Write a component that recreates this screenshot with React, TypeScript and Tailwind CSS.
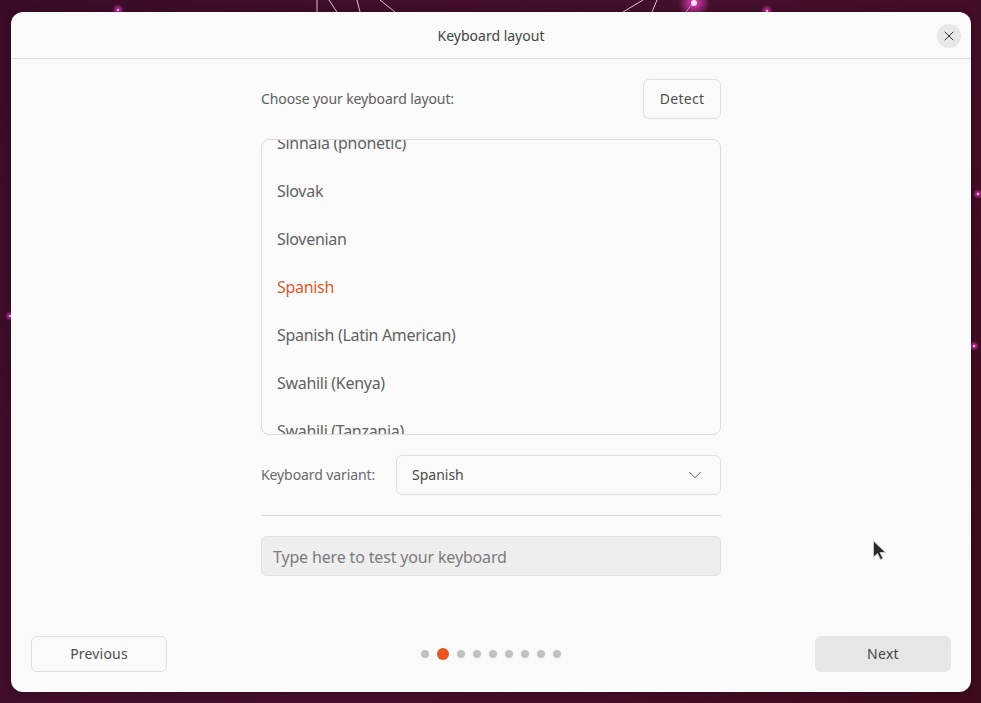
import { ChevronDown, X } from 'lucide-react';

const layouts = [
  'Sinhala (phonetic)',
  'Slovak',
  'Slovenian',
  'Spanish',
  'Spanish (Latin American)',
  'Swahili (Kenya)',
  'Swahili (Tanzania)',
];

const steps = [0, 1, 2, 3, 4, 5, 6, 7, 8];

const stars = [
  { x: 694, y: 3, r: 16, core: 3 },
  { x: 118, y: 10, r: 6, core: 1 },
  { x: 767, y: 11, r: 6, core: 1 },
  { x: 978, y: 194, r: 5, core: 1 },
  { x: 974, y: 346, r: 5, core: 1 },
  { x: 10, y: 316, r: 5, core: 1 },
];

function Backdrop() {
  return (
    <svg className="absolute inset-0" width="981" height="703" fill="none">
      <defs>
        <radialGradient id="glow">
          <stop offset="0" stopColor="#f040c8" stopOpacity="0.95" />
          <stop offset="1" stopColor="#f040c8" stopOpacity="0" />
        </radialGradient>
      </defs>
      <g stroke="#e6c4da" strokeWidth="1">
        <path d="M317 0v12M329 0l8 12M357 0l3 12M380 0l15 12" />
        <path d="M643 0l-20 12M657 0l-5 12M693 3l-7 9" />
      </g>
      {stars.map((star) => (
        <g key={star.x}>
          <circle cx={star.x} cy={star.y} r={star.r} fill="url(#glow)" />
          <circle cx={star.x} cy={star.y} r={star.core} fill="#ffe0f6" />
        </g>
      ))}
    </svg>
  );
}

export default function App() {
  return (
    <div className="relative flex h-[703px] w-[981px] overflow-hidden bg-[linear-gradient(120deg,#3c0b2a,#46102c_55%,#3e0a1e)] pt-3 pr-2.5 pb-[11px] pl-[11px] font-['Noto_Sans',sans-serif] text-[#4a4a4a]">
      <Backdrop />

      <div className="relative flex flex-1 flex-col overflow-hidden rounded-t-[12px] rounded-b-[12px] bg-[#fafafa] shadow-[0_0_8px_rgba(0,0,0,0.3)]">
        <header className="flex h-[47px] shrink-0 items-center justify-center border-b border-[#e0e0e0]">
          <h1 className="text-[14px] font-normal text-[#444]">Keyboard layout</h1>
          <button className="absolute top-3 right-[10px] flex h-6 w-6 items-center justify-center rounded-full bg-[#e8e8e8] text-[#333]">
            <X size={16} strokeWidth={1.5} />
          </button>
        </header>

        <main className="flex flex-1 flex-col items-center">
          <div className="flex w-[460px] flex-col">
            <div className="mt-5 flex h-10 items-center justify-between">
              <span className="pb-0.5 text-[14px] tracking-[-0.1px] text-[#606060]">Choose your keyboard layout:</span>
              <button className="h-10 w-[78px] rounded-md border border-[#e0e0e0] pb-0.5 text-[14px] tracking-[0.3px] text-[#4f4f4f]">
                Detect
              </button>
            </div>

            <div className="mt-5 h-[296px] overflow-hidden rounded-lg border border-[#dcdcdc]">
              <ul className="-mt-[21px] px-[15px]">
                {layouts.map((name) => (
                  <li
                    key={name}
                    className={`flex h-12 items-center text-[16px] tracking-[-0.3px] ${name === 'Spanish' ? 'text-[#e2582c]' : 'text-[#626262]'}`}
                  >
                    {name}
                  </li>
                ))}
              </ul>
            </div>

            <div className="mt-5 flex items-center justify-between">
              <span className="pb-0.5 text-[14px] tracking-[-0.1px] text-[#6a6a6a]">Keyboard variant:</span>
              <button className="flex h-10 w-[325px] items-center justify-between rounded-md border border-[#e0e0e0] pr-[14px] pl-[15px] text-[14px] text-[#4a4a4a]">
                <span className="pb-0.5">Spanish</span>
                <ChevronDown size={22} strokeWidth={1} className="text-[#555]" />
              </button>
            </div>

            <div className="mt-5 h-px bg-[#dadada]" />

            <div className="mt-5 flex h-10 items-center rounded-md border border-[#e0e0e0] bg-[#eeeeee] px-[11px] pt-0.5 text-[16px] tracking-[-0.16px] text-[#7c7c7c]">
              Type here to test your keyboard
            </div>
          </div>
        </main>

        <footer className="flex shrink-0 items-center justify-between px-5 pb-5">
          <button className="h-9 w-[136px] rounded-md border border-[#e0e0e0] pb-0.5 text-[14px] tracking-[0.2px] text-[#4f4f4f]">
            Previous
          </button>
          <div className="flex items-center gap-2">
            {steps.map((step) => (
              <span
                key={step}
                className={step === 1 ? 'h-3 w-3 rounded-full bg-[#e95420]' : 'h-2 w-2 rounded-full bg-[#c0c0c0]'}
              />
            ))}
          </div>
          <button className="h-9 w-[136px] rounded-md bg-[#e6e6e6] pb-0.5 text-[14px] tracking-[0.3px] text-[#444]">
            Next
          </button>
        </footer>

        {/* mouse pointer sitting over the window */}
        <svg className="absolute top-[528px] left-[861px]" width="16" height="24" viewBox="0 0 16 24">
          <path d="M1.5 1v16l4-3.5 3 6 2.5-1-3-6h5.5z" fill="#2a2a2a" stroke="#c8c8c8" strokeWidth="1" />
        </svg>
      </div>
    </div>
  );
}
